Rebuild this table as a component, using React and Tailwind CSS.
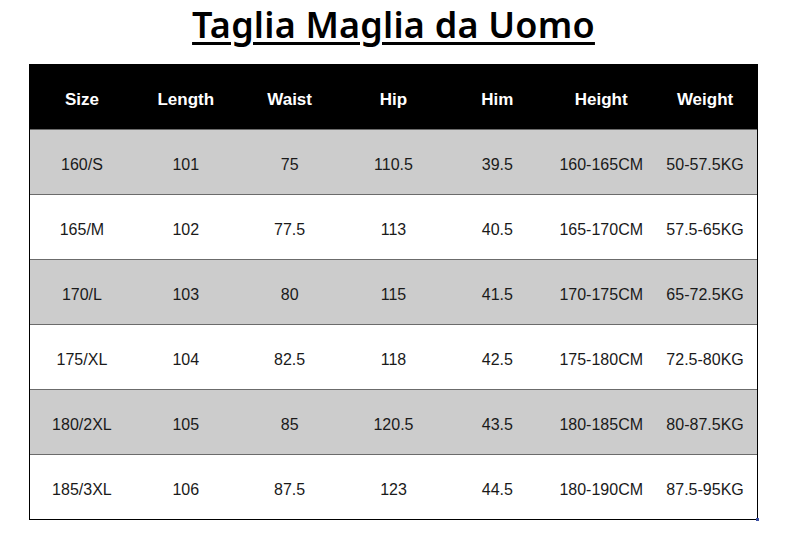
const headers = ["Size", "Length", "Waist", "Hip", "Him", "Height", "Weight"];

const rows = [
  ["160/S", "101", "75", "110.5", "39.5", "160-165CM", "50-57.5KG"],
  ["165/M", "102", "77.5", "113", "40.5", "165-170CM", "57.5-65KG"],
  ["170/L", "103", "80", "115", "41.5", "170-175CM", "65-72.5KG"],
  ["175/XL", "104", "82.5", "118", "42.5", "175-180CM", "72.5-80KG"],
  ["180/2XL", "105", "85", "120.5", "43.5", "180-185CM", "80-87.5KG"],
  ["185/3XL", "106", "87.5", "123", "44.5", "180-190CM", "87.5-95KG"],
];

export default function App() {
  return (
    <div className="w-[787px] h-[539px] bg-white overflow-hidden">
      <div className="h-[64px] flex justify-center pt-[3px]">
        <h1 className="font-['Noto_Sans',sans-serif] font-semibold text-[36px] leading-[44px] tracking-[0.2px] text-black underline decoration-[3px] underline-offset-[4px]">
          Taglia Maglia da Uomo
        </h1>
      </div>

      <div className="relative ml-[29px] w-[729px] border-l border-r border-b border-black font-['Liberation_Sans',Arial,sans-serif]">
        <div className="grid grid-cols-7 h-[65px] bg-black text-white font-bold text-[17px] items-center">
          {headers.map((h) => (
            <div key={h} className="text-center pt-[6px]">{h}</div>
          ))}
        </div>
        {rows.map((r, i) => (
          <div
            key={r[0]}
            className={`grid grid-cols-7 h-[65px] items-center text-[16px] text-[#1a1a1a] border-t border-[#6b6b6b] ${
              i % 2 === 0 ? "bg-[#cccccc]" : "bg-white"
            }`}
          >
            {r.map((c, j) => (
              <div key={j} className="text-center whitespace-nowrap pt-[6px]">{c}</div>
            ))}
          </div>
        ))}
        <div className="absolute right-[-2px] bottom-[-2px] w-[3px] h-[3px] bg-[#3b4fa0]" />
      </div>
    </div>
  );
}
